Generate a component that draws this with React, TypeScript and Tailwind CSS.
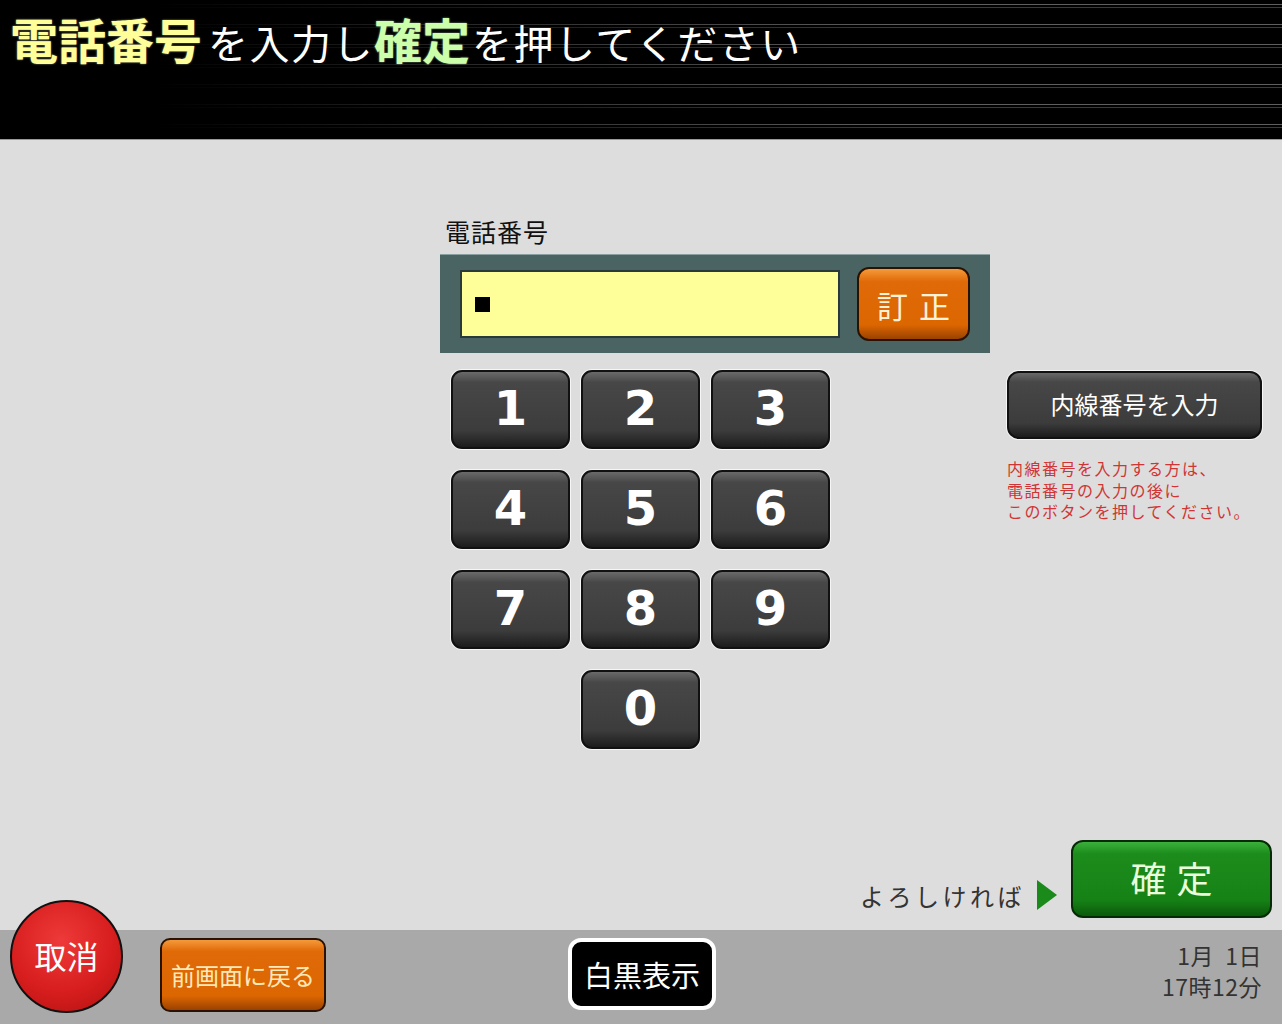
import React from "react";

const jp = "font-['Noto_Sans_CJK_JP','Noto_Sans',sans-serif]";

function Key({ n }: { n: string }) {
  return (
    <button className="w-[119px] h-[79px] rounded-[11px] border-2 border-[#111] bg-[linear-gradient(to_bottom,#6a6a6a_0%,#474747_14%,#3c3c3c_78%,#1c1c1c_100%)] shadow-[0_0_0_1px_#f6f6f6] flex items-center justify-center text-white text-[48px] font-bold font-['DejaVu_Sans',sans-serif] leading-none pb-[4px]">
      {n}
    </button>
  );
}

export default function App() {
  return (
    <div className={`w-[1282px] h-[1024px] flex flex-col overflow-hidden ${jp}`}>
      {/* Header */}
      <header className="relative h-[140px] bg-black border-b border-[#9a9a9a]">
        <div className="absolute inset-0 bg-[repeating-linear-gradient(to_bottom,transparent_0px,transparent_4px,#5e5e5e_4px,#5e5e5e_5px,transparent_5px,transparent_7px,#3a3a3a_7px,#3a3a3a_8px,transparent_8px,transparent_20px)] [mask-image:linear-gradient(to_right,transparent_12%,black_70%)]" />
        <h1 className="relative z-10 pl-[10px] pt-[14px] flex items-baseline leading-none whitespace-nowrap">
          <span className="text-[48px] font-bold text-[#ffff99] [text-shadow:0_0_2px_#998]">電話番号</span>
          <span className="text-[40px] text-white tracking-[1.5px] ml-[6px]">を入力し</span>
          <span className="text-[48px] font-bold text-[#ccffaa] [text-shadow:0_0_2px_#8a8]">確定</span>
          <span className="text-[40px] text-white tracking-[1.5px] ml-[2px]">を押してください</span>
        </h1>
      </header>

      {/* Main */}
      <main className="flex-1 bg-[#dddddd] flex flex-col">
        <div className="flex-1 flex items-start pt-[76px]">
          <div className="w-[440px]" />
          {/* center column */}
          <div className="w-[550px] flex flex-col">
            <div className="text-[25px] leading-[30px] text-[#111] pl-[5px] mb-[8px] tracking-[1px]">電話番号</div>
            <div className="h-[99px] bg-[#4a6363] border-t border-[#8aa0a0] flex items-center px-[20px] gap-[17px]">
              <div className="w-[380px] h-[68px] bg-[#ffff99] border-2 border-[#2a3a3a] flex items-center pl-[13px]">
                <div className="w-[15px] h-[15px] bg-black" />
              </div>
              <button className="w-[113px] h-[74px] rounded-[12px] border-2 border-[#2a1200] bg-[linear-gradient(to_bottom,#f59a3a_0%,#e06a08_18%,#dc6600_80%,#9a4200_100%)] text-[#fff2d8] text-[31px] leading-none tracking-[11px] pl-[11px] flex items-center justify-center">
                訂正
              </button>
            </div>
            <div className="mt-[17px] ml-[11px] grid grid-cols-[119px_119px_119px] gap-x-[11px] gap-y-[21px]">
              <Key n="1" />
              <Key n="2" />
              <Key n="3" />
              <Key n="4" />
              <Key n="5" />
              <Key n="6" />
              <Key n="7" />
              <Key n="8" />
              <Key n="9" />
              <div />
              <Key n="0" />
            </div>
          </div>
          {/* right column */}
          <div className="ml-[17px] mt-[155px] w-[255px] flex flex-col">
            <button className="w-[255px] h-[68px] rounded-[12px] border-2 border-[#111] bg-[linear-gradient(to_bottom,#6a6a6a_0%,#474747_14%,#3c3c3c_78%,#1c1c1c_100%)] shadow-[0_0_0_1px_#f6f6f6] text-white text-[24px] leading-none flex items-center justify-center pb-[2px]">
              内線番号を入力
            </button>
            <div className="mt-[19px] text-[16px] leading-[21.5px] tracking-[1.5px] text-[#d03535] whitespace-nowrap">
              <div>内線番号を入力する方は、</div>
              <div>電話番号の入力の後に</div>
              <div>このボタンを押してください。</div>
            </div>
          </div>
        </div>
        {/* bottom row */}
        <div className="flex items-end justify-end pr-[10px] pb-[12px]">
          <span className="text-[24px] leading-none text-[#333] tracking-[3.5px] mb-[10px]">よろしければ</span>
          <svg width="20" height="30" viewBox="0 0 20 30" className="ml-[12px] mb-[8px]">
            <polygon points="0,0 20,15 0,30" fill="#1a8a1a" />
          </svg>
          <button className="ml-[14px] w-[201px] h-[78px] rounded-[12px] border-2 border-[#062a06] bg-[linear-gradient(to_bottom,#3bb03b_0%,#1c8c1c_16%,#168216_78%,#0a5a0a_100%)] text-[#eaffdc] text-[36px] leading-none tracking-[10px] pl-[10px] flex items-center justify-center pb-[4px]">
            確定
          </button>
        </div>
      </main>

      {/* Footer */}
      <footer className="h-[94px] bg-[#a9a9a9] grid grid-cols-3 items-start">
        <div className="flex items-start pl-[10px]">
          <button className="-mt-[30px] w-[113px] h-[113px] rounded-full border-2 border-[#111] bg-[radial-gradient(circle_at_45%_35%,#ee3a3a_0%,#d81e1e_55%,#b01010_100%)] text-white text-[32px] leading-none flex items-center justify-center pb-[4px]">
            取消
          </button>
          <button className="ml-[37px] mt-[8px] w-[166px] h-[74px] rounded-[10px] border-2 border-[#2a1200] bg-[linear-gradient(to_bottom,#f59a3a_0%,#e06a08_16%,#dc6600_80%,#9a4200_100%)] text-[#ffe9b8] text-[24px] leading-none flex items-center justify-center">
            前画面に戻る
          </button>
        </div>
        <div className="flex justify-center pt-[8px]">
          <button className="w-[148px] h-[72px] rounded-[13px] border-[4px] border-white bg-black text-white text-[29px] leading-none flex items-center justify-center ml-[2px]">
            白黒表示
          </button>
        </div>
        <div className="flex justify-end pr-[20px] pt-[10px]">
          <div className="text-right text-[23px] leading-[31px] text-[#333] tracking-[0.5px]">
            <div>1月&nbsp;&nbsp;1日</div>
            <div>17時12分</div>
          </div>
        </div>
      </footer>
    </div>
  );
}
